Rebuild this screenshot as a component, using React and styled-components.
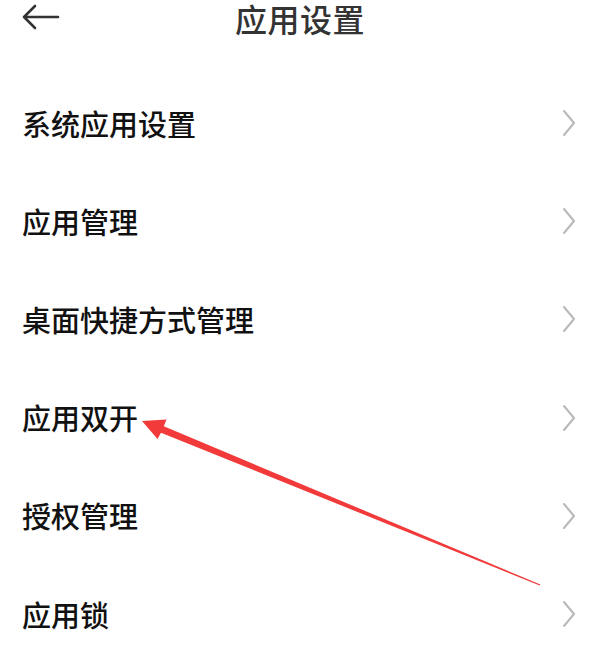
import React from 'react'
import styled, {createGlobalStyle} from 'styled-components'

const GlobalStl = createGlobalStyle`
  html, body {
    margin: 0;
    padding: 0;
    background: #fff;
  }
  body {
    font-family: "Noto Sans CJK SC", "Noto Sans", sans-serif;
  }
`

const PageStl = styled.div`
  position: relative;
  width: 604px;
  height: 650px;
  overflow: hidden;
  background: #fff;
`

const HeaderStl = styled.div`
  position: relative;
  height: 36px;
  display: flex;
  align-items: center;
  justify-content: center;
`

const BackStl = styled.div`
  position: absolute;
  left: 20px;
  top: 2px;
  width: 40px;
  height: 32px;
  display: flex;
  align-items: center;
`

const TitleStl = styled.div`
  font-size: 32px;
  font-weight: 500;
  color: #333;
  line-height: 36px;
  letter-spacing: 0.5px;
  margin-left: -4px;
`

const ListStl = styled.div`
  display: flex;
  flex-direction: column;
  padding-top: 38px;
`

const RowStl = styled.div`
  height: 98.2px;
  display: flex;
  align-items: center;
  justify-content: space-between;
  padding: 0 28px 0 22px;
`

const LabelStl = styled.div`
  font-size: 29px;
  font-weight: 500;
  color: #111;
  line-height: 1;
`

const ArrowLayerStl = styled.svg`
  position: absolute;
  left: 0;
  top: 0;
  pointer-events: none;
`

const Chevron = () => (
    <svg width="14" height="28" viewBox="0 0 14 28">
        <path d="M2 2 L12 14 L2 26" fill="none" stroke="#b8b8b8" strokeWidth="2" strokeLinecap="round" strokeLinejoin="round"/>
    </svg>
)

const items = ['系统应用设置', '应用管理', '桌面快捷方式管理', '应用双开', '授权管理', '应用锁']

export default function App() {
    return (
        <PageStl>
            <GlobalStl/>
            <HeaderStl>
                <BackStl>
                    <svg width="40" height="32" viewBox="0 0 40 32">
                        <path d="M4 15 L38 15 M15 4 L4 15 L15 26" fill="none" stroke="#333" strokeWidth="2.6" strokeLinecap="round" strokeLinejoin="round"/>
                    </svg>
                </BackStl>
                <TitleStl>应用设置</TitleStl>
            </HeaderStl>
            <ListStl>
                {items.map(name => (
                    <RowStl key={name}>
                        <LabelStl>{name}</LabelStl>
                        <Chevron/>
                    </RowStl>
                ))}
            </ListStl>
            <ArrowLayerStl width="604" height="650" viewBox="0 0 604 650">
                <polygon
                    fill="#f23a3a"
                    points="142,421 166.5,419.5 163.8,426.2 540.3,584.6 539.7,585.4 161,432.8 157.5,439"
                />
            </ArrowLayerStl>
        </PageStl>
    )
}
